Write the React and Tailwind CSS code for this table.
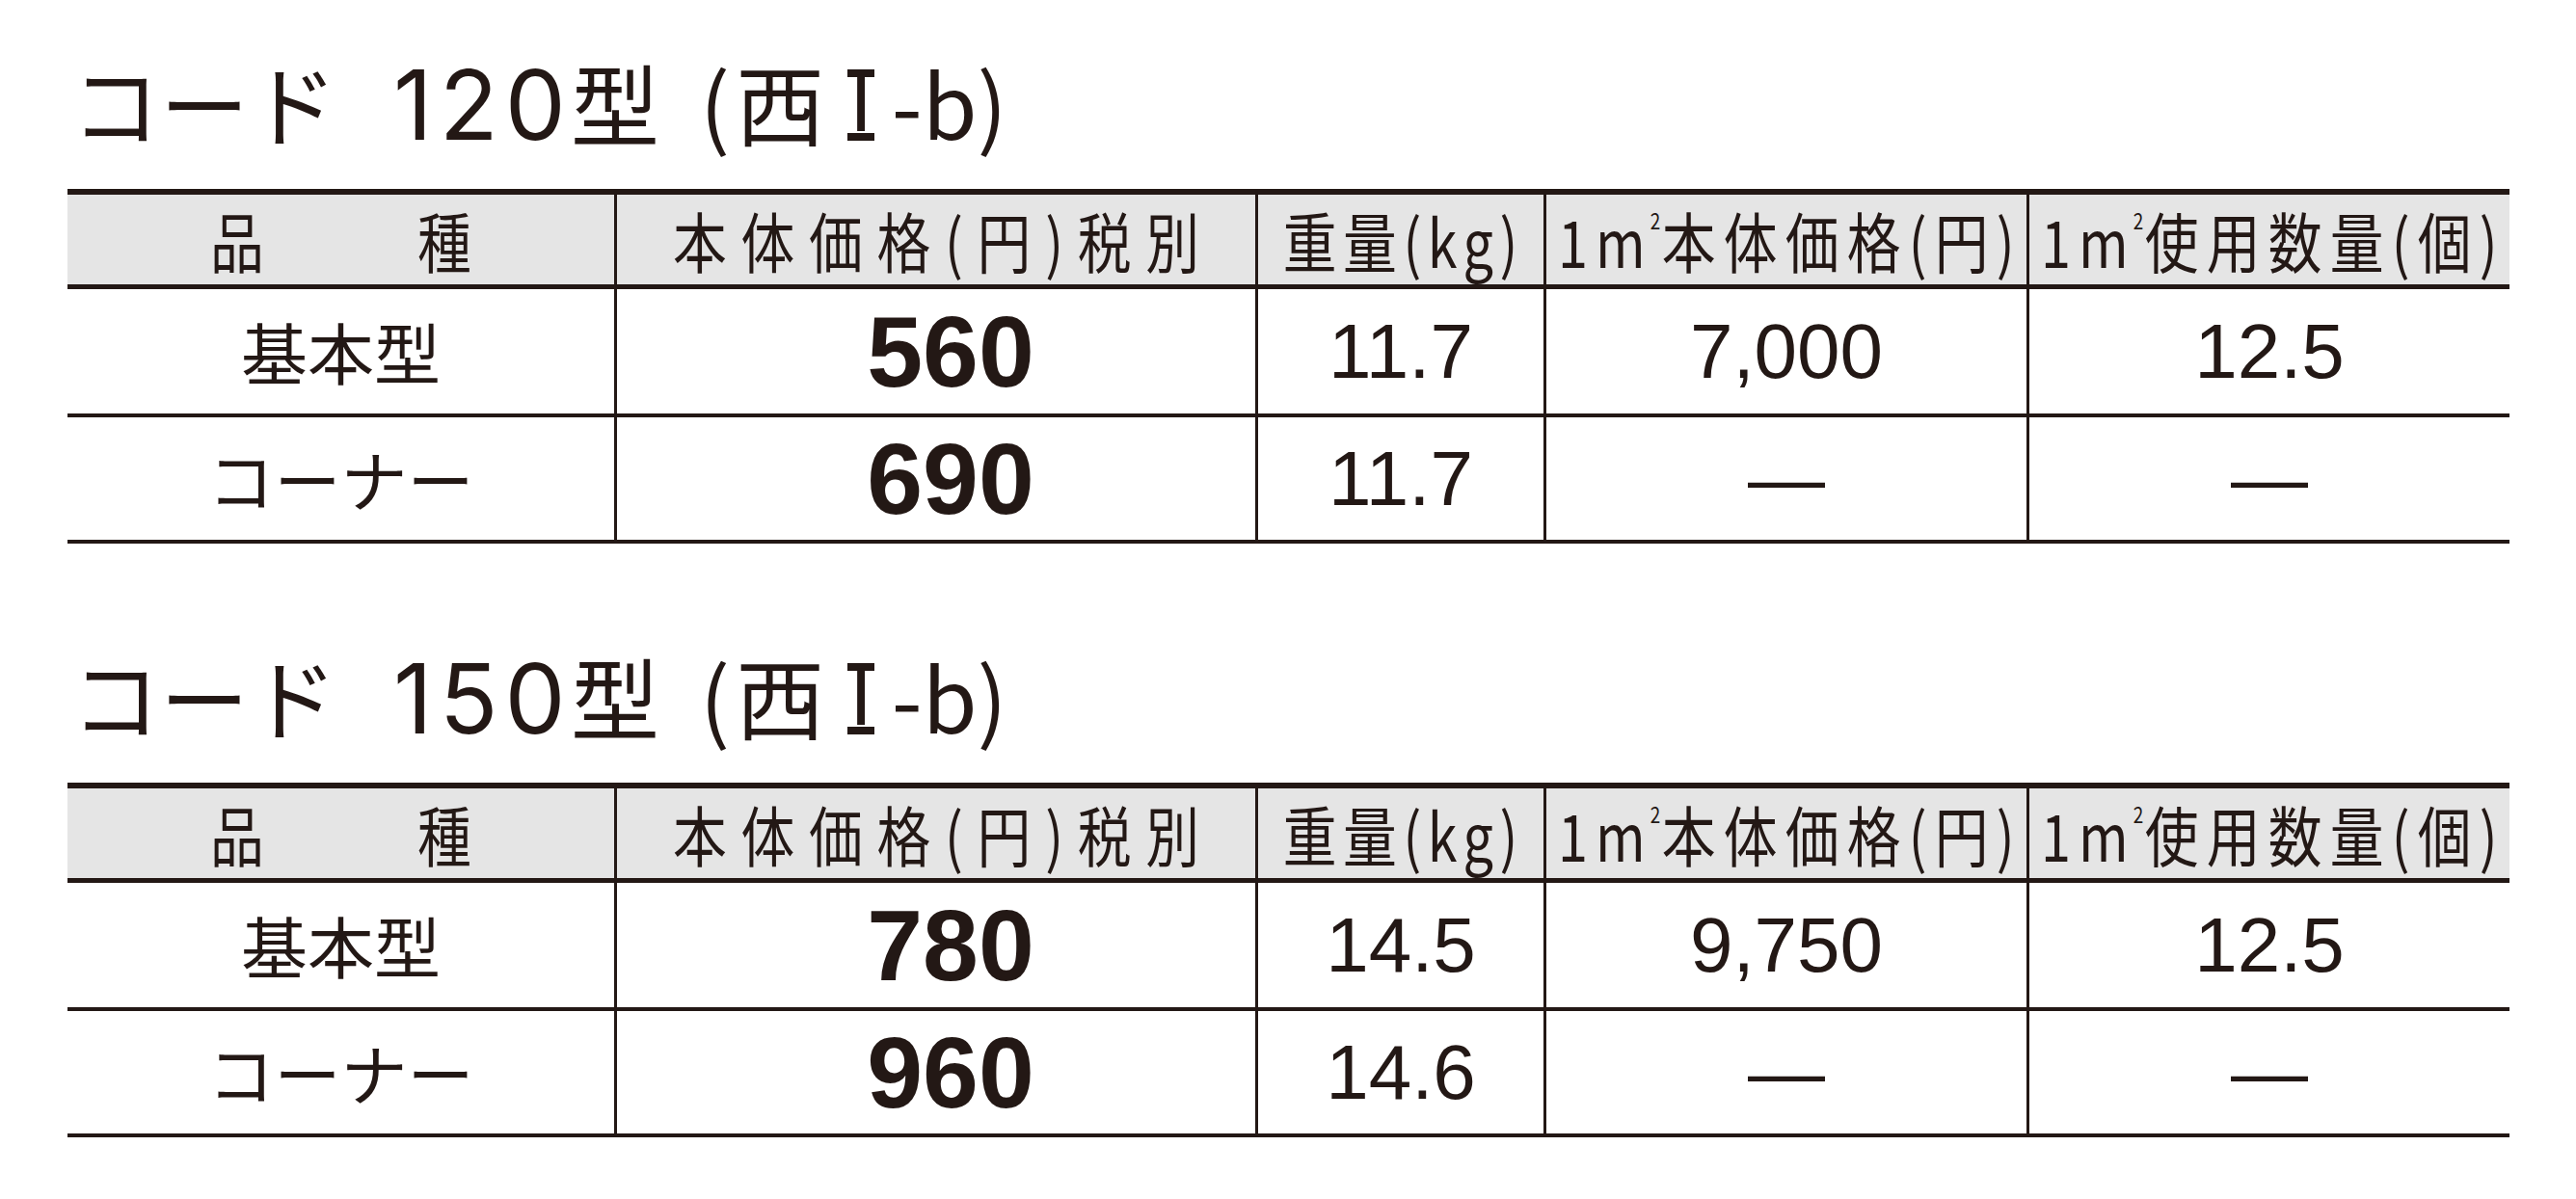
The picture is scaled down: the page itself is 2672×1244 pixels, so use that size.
import React from "react";

const jp = "font-['Noto_Sans_CJK_JP',sans-serif]";
const num = "font-['Liberation_Sans','Noto_Sans_CJK_JP',sans-serif]";
const cols = "grid grid-cols-[567px_665px_299px_501px_501px]";

const sections = [
  {
    model: "120",
    rows: [
      { name: "基本型", price: "560", weight: "11.7", perM2: "7,000", qty: "12.5" },
      { name: "コーナー", price: "690", weight: "11.7", perM2: "—", qty: "—" },
    ],
  },
  {
    model: "150",
    rows: [
      { name: "基本型", price: "780", weight: "14.5", perM2: "9,750", qty: "12.5" },
      { name: "コーナー", price: "960", weight: "14.6", perM2: "—", qty: "—" },
    ],
  },
];

const Title = ({ model }) => {
  return (
    <div
      className={`h-[196px] pt-[59px] pl-[74px] flex items-baseline text-[92px] leading-none text-[#231815] ${jp}`}
    >
      <span className="mr-[58px]">コード</span>
      <span className="w-[184px] shrink-0 text-[100px] tracking-[7px] font-['Inter',sans-serif]">
        {model}
      </span>
      <span>型</span>
      <span className="ml-[42px] mr-[6px]">(</span>
      <span>西</span>
      {/* roman numeral with bars like the print face */}
      <span className="relative -top-[9px] ml-[24px] mr-[18px] inline-block border-y-[8px] border-[#231815] px-[2px] text-[80px] leading-[58px] font-['DejaVu_Sans',sans-serif]">
        Ⅰ
      </span>
      <span>-b</span>
      <span>)</span>
    </div>
  );
};

const HeadText = ({ children, className = "" }) => (
  <span
    className={`inline-block leading-none text-[68px] scale-x-[0.82] whitespace-nowrap ${jp} ${className}`}
  >
    {children}
  </span>
);

const Sq = () => (
  <span className="inline-block align-top text-[23px] leading-none tracking-normal -ml-[4px] mr-[2px] relative top-[2px]">
    2
  </span>
);

const cell = "flex items-center justify-center";
const divider = "border-l-[3px] border-[#231815]";

const PriceTable = ({ rows }) => {
  return (
    <div className="ml-[70px] w-[2533px] border-t-[6px] border-[#231815] text-[#231815]">
      <div className={`${cols} h-[98px] bg-[#e5e5e5] border-b-[5px] border-[#231815]`}>
        <div className={`${cell} gap-[147px]`}>
          <HeadText>品</HeadText>
          <HeadText>種</HeadText>
        </div>
        <div className={`${cell} ${divider}`}>
          <HeadText className="tracking-[18px] pl-[18px]">本体価格(円)税別</HeadText>
        </div>
        <div className={`${cell} ${divider}`}>
          <HeadText className="tracking-[8px] pl-[8px]">重量(kg)</HeadText>
        </div>
        <div className={`${cell} ${divider}`}>
          <HeadText className="tracking-[10px] pl-[10px]">
            1m<Sq />本体価格(円)
          </HeadText>
        </div>
        <div className={`${cell} ${divider}`}>
          <HeadText className="tracking-[10px] pl-[10px]">
            1m<Sq />使用数量(個)
          </HeadText>
        </div>
      </div>
      {rows.map((row, i) => (
        <div
          key={row.name}
          className={`${cols} ${i === 0 ? "h-[133px]" : "h-[131px]"} border-b-[4px] border-[#231815]`}
        >
          <div className={`${cell} text-[69px] leading-none ${jp}`}>{row.name}</div>
          <div className={`${cell} ${divider} pl-[30px] text-[104px] font-bold leading-none ${num}`}>
            {row.price}
          </div>
          <div className={`${cell} ${divider} text-[80px] leading-none ${num}`}>{row.weight}</div>
          <div className={`${cell} ${divider} text-[80px] leading-none ${num}`}>{row.perM2}</div>
          <div className={`${cell} ${divider} text-[80px] leading-none ${num}`}>{row.qty}</div>
        </div>
      ))}
    </div>
  );
};

export default function App() {
  return (
    <div className="w-[2672px] h-[1244px] bg-white overflow-hidden">
      {sections.map((s, i) => (
        <div key={s.model} className={i === 0 ? "" : "mt-[52px]"}>
          <Title model={s.model} />
          <PriceTable rows={s.rows} />
        </div>
      ))}
    </div>
  );
}
